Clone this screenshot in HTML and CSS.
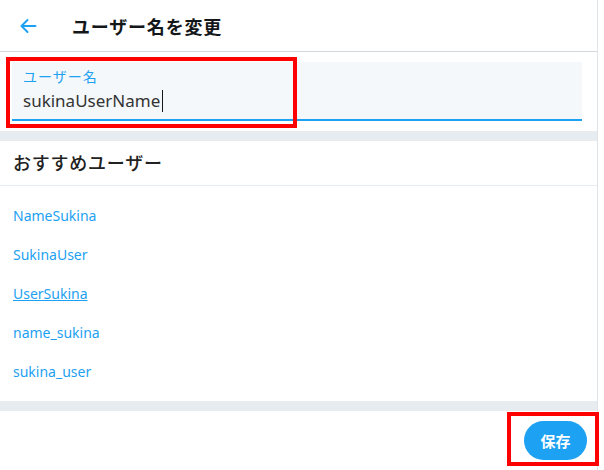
FILE: index.html
```html
<!DOCTYPE html>
<html lang="ja">
<head>
<meta charset="utf-8">
<link rel="stylesheet" href="styles.css">
</head>
<body>
<div class="page">
  <header class="header">
    <span class="back">
      <svg width="18" height="16" viewBox="0 0 18 16"><path d="M16.5 8H2.5M8.5 2L2.5 8l6 6" fill="none" stroke="#1da1f2" stroke-width="2" stroke-linecap="round" stroke-linejoin="round"/></svg>
    </span>
    <h1 class="title">ユーザー名を変更</h1>
  </header>
  <section class="form">
    <div class="field">
      <div class="label">ユーザー名</div>
      <div class="value">sukinaUserName<span class="caret"></span></div>
    </div>
  </section>
  <div class="band"></div>
  <h2 class="section-title">おすすめユーザー</h2>
  <ul class="list">
    <li><a class="link">NameSukina</a></li>
    <li><a class="link">SukinaUser</a></li>
    <li><a class="link underline">UserSukina</a></li>
    <li><a class="link">name_sukina</a></li>
    <li><a class="link">sukina_user</a></li>
  </ul>
  <div class="band"></div>
  <footer class="footer">
    <button class="save">保存</button>
  </footer>
  <div class="mark mark-field"></div>
  <div class="mark mark-save"></div>
</div>
</body>
</html>
```
FILE: styles.css
```css
* { box-sizing: border-box; }
html, body { margin: 0; padding: 0; background: #fff; }
body {
  font-family: "Noto Sans", "Noto Sans CJK JP", sans-serif;
  color: #14171a;
}
.page {
  position: relative;
  width: 598px;
  height: 470px;
  border-right: 1px solid #dfe4e8;
}
.header {
  height: 52px;
  border-bottom: 1px solid #d4d9dd;
  display: flex;
  align-items: center;
}
.back {
  width: 72px;
  padding-left: 19px;
  display: flex;
  align-items: center;
}
.title {
  margin: 0;
  font-size: 18px;
  font-weight: 700;
  letter-spacing: 0.8px;
  font-family: "Noto Sans CJK JP", sans-serif;
}
.form {
  padding: 10px 15px 10px 12px;
}
.field {
  height: 59px;
  background: #f5f8fa;
  border-bottom: 2px solid #1da1f2;
  padding: 4px 11px 0;
}
.label {
  font-family: "Noto Sans CJK JP", sans-serif;
  font-size: 14px;
  color: #1da1f2;
  line-height: 20px;
  letter-spacing: 1px;
}
.value {
  font-size: 17px;
  line-height: 30px;
  color: #333;
  display: flex;
  align-items: center;
}
.caret {
  display: inline-block;
  width: 1px;
  height: 22px;
  background: #14171a;
  margin-left: 2px;
}
.band {
  height: 10px;
  background: #e6ecf0;
}
.section-title {
  margin: 0;
  height: 45px;
  border-bottom: 1px solid #e6ecf0;
  padding: 0 13px 2px;
  display: flex;
  align-items: center;
  font-family: "Noto Sans CJK JP", sans-serif;
  font-size: 18px;
  font-weight: 500;
  letter-spacing: 0.75px;
  color: #222;
}
.list {
  list-style: none;
  margin: 0;
  padding: 10px 13px;
}
.list li {
  height: 39px;
  display: flex;
  align-items: center;
}
.link {
  font-size: 14px;
  color: #1da1f2;
}
.underline { text-decoration: underline; }
.footer {
  display: flex;
  justify-content: flex-end;
  padding: 10px 10px 0;
}
.save {
  width: 63px;
  height: 39px;
  border: none;
  border-radius: 20px;
  background: #1da1f2;
  color: #fff;
  font-family: "Noto Sans CJK JP", sans-serif;
  font-weight: 700;
  font-size: 15px;
  padding: 0;
}
.mark {
  position: absolute;
  border: 4px solid #f00;
}
.mark-field {
  left: 6px;
  top: 57px;
  width: 291px;
  height: 71px;
}
.mark-save {
  left: 507px;
  top: 412px;
  width: 92px;
  height: 54px;
}
```
